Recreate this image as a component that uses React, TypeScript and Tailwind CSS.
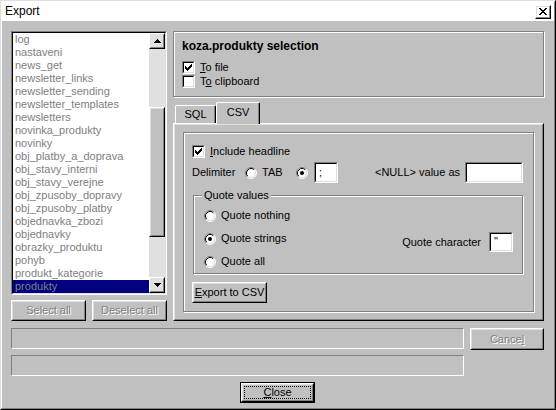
import React from "react";

const tables = [
  "log",
  "nastaveni",
  "news_get",
  "newsletter_links",
  "newsletter_sending",
  "newsletter_templates",
  "newsletters",
  "novinka_produkty",
  "novinky",
  "obj_platby_a_doprava",
  "obj_stavy_interni",
  "obj_stavy_verejne",
  "obj_zpusoby_dopravy",
  "obj_zpusoby_platby",
  "objednavka_zbozi",
  "objednavky",
  "obrazky_produktu",
  "pohyb",
  "produkt_kategorie",
  "produkty",
];

type BoxProps = { className?: string; inner?: string; children?: React.ReactNode };

const Sunken = ({ className = "", inner = "", children }: BoxProps) => (
  <div className={`border border-t-[#808080] border-l-[#808080] border-r-white border-b-white ${className}`}>
    <div className={`h-full w-full border border-t-black border-l-black border-r-[#dfdfdf] border-b-[#dfdfdf] ${inner}`}>
      {children}
    </div>
  </div>
);

const Raised = ({ className = "", inner = "", children }: BoxProps) => (
  <div className={`border border-t-white border-l-white border-r-black border-b-black ${className}`}>
    <div className={`h-full w-full border border-t-[#dfdfdf] border-l-[#dfdfdf] border-r-[#808080] border-b-[#808080] ${inner}`}>
      {children}
    </div>
  </div>
);

const Etched = ({ className = "", children }: BoxProps) => (
  <div className={`border border-[#808080] shadow-[inset_1px_1px_#fff,1px_1px_#fff] ${className}`}>{children}</div>
);

const Disabled = ({ children }: { children: React.ReactNode }) => (
  <span className="text-[#808080] [text-shadow:1px_1px_#fff]">{children}</span>
);

const Check = ({ checked }: { checked?: boolean }) => (
  <Sunken className="w-[13px] h-[13px] shrink-0" inner="bg-white flex items-center justify-center">
    {checked && (
      <svg width="7" height="7" viewBox="0 0 7 7" shapeRendering="crispEdges">
        <path
          d="M6 0h1v1h-1z M5 1h2v1h-2z M0 2h1v1h-1z M4 2h3v1h-3z M0 3h2v1h-2z M3 3h3v1h-3z M0 4h5v1h-5z M1 5h3v1h-3z M2 6h1v1h-1z"
          fill="#000"
        />
      </svg>
    )}
  </Sunken>
);

const Radio = ({ checked }: { checked?: boolean }) => (
  <svg width="12" height="12" viewBox="0 0 12 12" className="shrink-0">
    <circle cx="6" cy="6" r="5" fill="#fff" />
    <path d="M2.11 9.89A5.5 5.5 0 0 1 9.89 2.11" fill="none" stroke="#808080" />
    <path d="M9.89 2.11A5.5 5.5 0 0 1 2.11 9.89" fill="none" stroke="#fff" />
    <path d="M2.82 9.18A4.5 4.5 0 0 1 9.18 2.82" fill="none" stroke="#000" />
    <path d="M9.18 2.82A4.5 4.5 0 0 1 2.82 9.18" fill="none" stroke="#dfdfdf" />
    {checked && <circle cx="6" cy="6" r="2" fill="#000" />}
  </svg>
);

const Arrow = ({ down }: { down?: boolean }) => (
  <svg width="7" height="4" viewBox="0 0 7 4" shapeRendering="crispEdges" className={down ? "rotate-180" : ""}>
    <path d="M3 0h1v1h1v1h1v1h1v1H0V3h1V2h1V1h1z" fill="#000" />
  </svg>
);

const CloseGlyph = () => (
  <svg width="8" height="7" viewBox="0 0 8 7" shapeRendering="crispEdges">
    <path
      d="M0 0h2v1H0z M6 0h2v1H6z M1 1h2v1H1z M5 1h2v1H5z M2 2h4v1H2z M3 3h2v1H3z M2 4h4v1H2z M1 5h2v1H1z M5 5h2v1H5z M0 6h2v1H0z M6 6h2v1H6z"
      fill="#000"
    />
  </svg>
);

export default function App() {
  return (
    <div className="w-[556px] h-[410px] bg-[#c0c0c0] text-[11px] leading-[13px] text-black font-['Liberation_Sans',Arial,sans-serif] border border-t-[#dfdfdf] border-l-[#dfdfdf] border-r-black border-b-black">
      <div className="h-full w-full flex flex-col border border-t-white border-l-white border-r-[#808080] border-b-[#808080]">
        {/* title bar */}
        <div className="h-[19px] bg-white flex items-center justify-between pl-[3px] pr-[3px] shrink-0">
          <span className="text-[12px]">Export</span>
          <Raised className="w-[16px] h-[14px]" inner="flex items-center justify-center">
            <CloseGlyph />
          </Raised>
        </div>

        <div className="flex-1 flex flex-col pl-[9px] pr-[10px] pt-[10px]">
          <div className="flex gap-[6px] h-[290px]">
            {/* left column */}
            <div className="w-[156px] flex flex-col">
              <Sunken className="h-[264px]" inner="flex bg-white">
                <div className="flex-1 flex flex-col overflow-hidden">
                  {tables.map((t) => (
                    <div
                      key={t}
                      className={`h-[13px] shrink-0 pl-[2px] whitespace-nowrap text-[#808080] ${t === "produkty" ? "bg-[#000080]" : ""}`}
                    >
                      {t}
                    </div>
                  ))}
                </div>
                <div className="w-[16px] flex flex-col bg-[#e0e0e0]">
                  <Raised className="h-[16px] shrink-0" inner="flex items-center justify-center">
                    <Arrow />
                  </Raised>
                  <div className="flex-1 pt-[58px]">
                    <Raised className="h-[130px]" inner="bg-[#c0c0c0]" />
                  </div>
                  <Raised className="h-[16px] shrink-0" inner="flex items-center justify-center">
                    <Arrow down />
                  </Raised>
                </div>
              </Sunken>
              <div className="flex gap-[6px] mt-[5px]">
                <Raised className="flex-1 h-[21px]" inner="flex items-center justify-center">
                  <Disabled>Select all</Disabled>
                </Raised>
                <Raised className="flex-1 h-[21px]" inner="flex items-center justify-center">
                  <Disabled>Deselect all</Disabled>
                </Raised>
              </div>
            </div>

            {/* right column */}
            <div className="flex-1 flex flex-col">
              <Etched className="h-[66px] pl-[8px] pt-[8px] flex flex-col">
                <div className="font-bold text-[12px] h-[13px]">koza.produkty selection</div>
                <div className="flex items-center gap-[5px] h-[14px] mt-[7px]">
                  <Check checked />
                  <span>
                    <u>T</u>o file
                  </span>
                </div>
                <div className="flex items-center gap-[5px] h-[14px]">
                  <Check />
                  <span>
                    T<u>o</u> clipboard
                  </span>
                </div>
              </Etched>

              <div className="mt-[5px] flex flex-col">
                <div className="flex items-end h-[21px] pl-[2px]">
                  <div className="w-[41px] h-[18px] flex items-center justify-center rounded-t-[2px] border-t border-l border-t-white border-l-white border-r border-r-black shadow-[inset_-1px_0_#808080]">
                    SQL
                  </div>
                  <div className="relative z-10 -mb-px w-[44px] h-[22px] flex items-start justify-center pt-[3px] bg-[#c0c0c0] rounded-t-[2px] border-t border-l border-t-white border-l-white border-r border-r-black shadow-[inset_-1px_0_#808080]">
                    CSV
                  </div>
                </div>
                <Raised className="h-[198px]" inner="px-[8px] pt-[7px] pb-[7px] border-t-[#c0c0c0]">
                  <Etched className="h-full pl-[8px] pr-[10px] pt-[12px] flex flex-col">
                    <div className="flex items-center gap-[5px] h-[13px]">
                      <Check checked />
                      <span>
                        <u>I</u>nclude headline
                      </span>
                    </div>
                    <div className="flex items-center h-[21px] mt-[4px]">
                      <span className="w-[53px] shrink-0">Delimiter</span>
                      <Radio />
                      <span className="w-[39px] pl-[5px] shrink-0">TAB</span>
                      <Radio checked />
                      <Sunken className="ml-[6px] w-[24px] h-[21px]" inner="bg-white pl-[3px] pt-[2px]">
                        ;
                      </Sunken>
                      <span className="ml-auto mr-[5px]">&lt;NULL&gt; value as</span>
                      <Sunken className="w-[58px] h-[21px]" inner="bg-white" />
                    </div>
                    <Etched className="relative mt-[12px] ml-[1px] h-[79px] pt-[8px] pl-[10px] pr-[9px] flex flex-col">
                      <span className="absolute -top-[7px] left-[8px] px-[2px] bg-[#c0c0c0]">Quote values</span>
                      <div className="flex items-center gap-[5px] h-[23px]">
                        <Radio />
                        <span>Quote nothing</span>
                      </div>
                      <div className="flex items-center h-[23px]">
                        <div className="flex items-center gap-[5px]">
                          <Radio checked />
                          <span>Quote strings</span>
                        </div>
                        <div className="ml-auto self-start mt-[5px] flex items-center gap-[8px]">
                          <span>Quote character</span>
                          <Sunken className="w-[24px] h-[20px]" inner="bg-white pl-[3px] pt-[1px]">
                            "
                          </Sunken>
                        </div>
                      </div>
                      <div className="flex items-center gap-[5px] h-[23px]">
                        <Radio />
                        <span>Quote all</span>
                      </div>
                    </Etched>
                    <Raised className="mt-[8px] w-[75px] h-[21px]" inner="flex items-center justify-center">
                      <span>
                        <u>E</u>xport to CSV
                      </span>
                    </Raised>
                  </Etched>
                </Raised>
              </div>
            </div>
          </div>

          {/* progress rows */}
          <div className="flex mt-[7px] h-[21px]">
            <div className="w-[453px] h-full border border-t-[#808080] border-l-[#808080] border-r-white border-b-white" />
            <Raised className="ml-[6px] flex-1 h-[22px]" inner="flex items-center justify-center">
              <Disabled>
                Cance<u>l</u>
              </Disabled>
            </Raised>
          </div>
          <div className="mt-[6px] w-[453px] h-[21px] border border-t-[#808080] border-l-[#808080] border-r-white border-b-white" />
          <div className="mt-[6px] flex justify-center">
            <div className="w-[75px] h-[21px] border border-black">
              <Raised className="h-full" inner="p-[1px]">
                <div className="h-full w-full border border-dotted border-black flex items-center justify-center">
                  <span>
                    <u>C</u>lose
                  </span>
                </div>
              </Raised>
            </div>
          </div>
        </div>
      </div>
    </div>
  );
}
